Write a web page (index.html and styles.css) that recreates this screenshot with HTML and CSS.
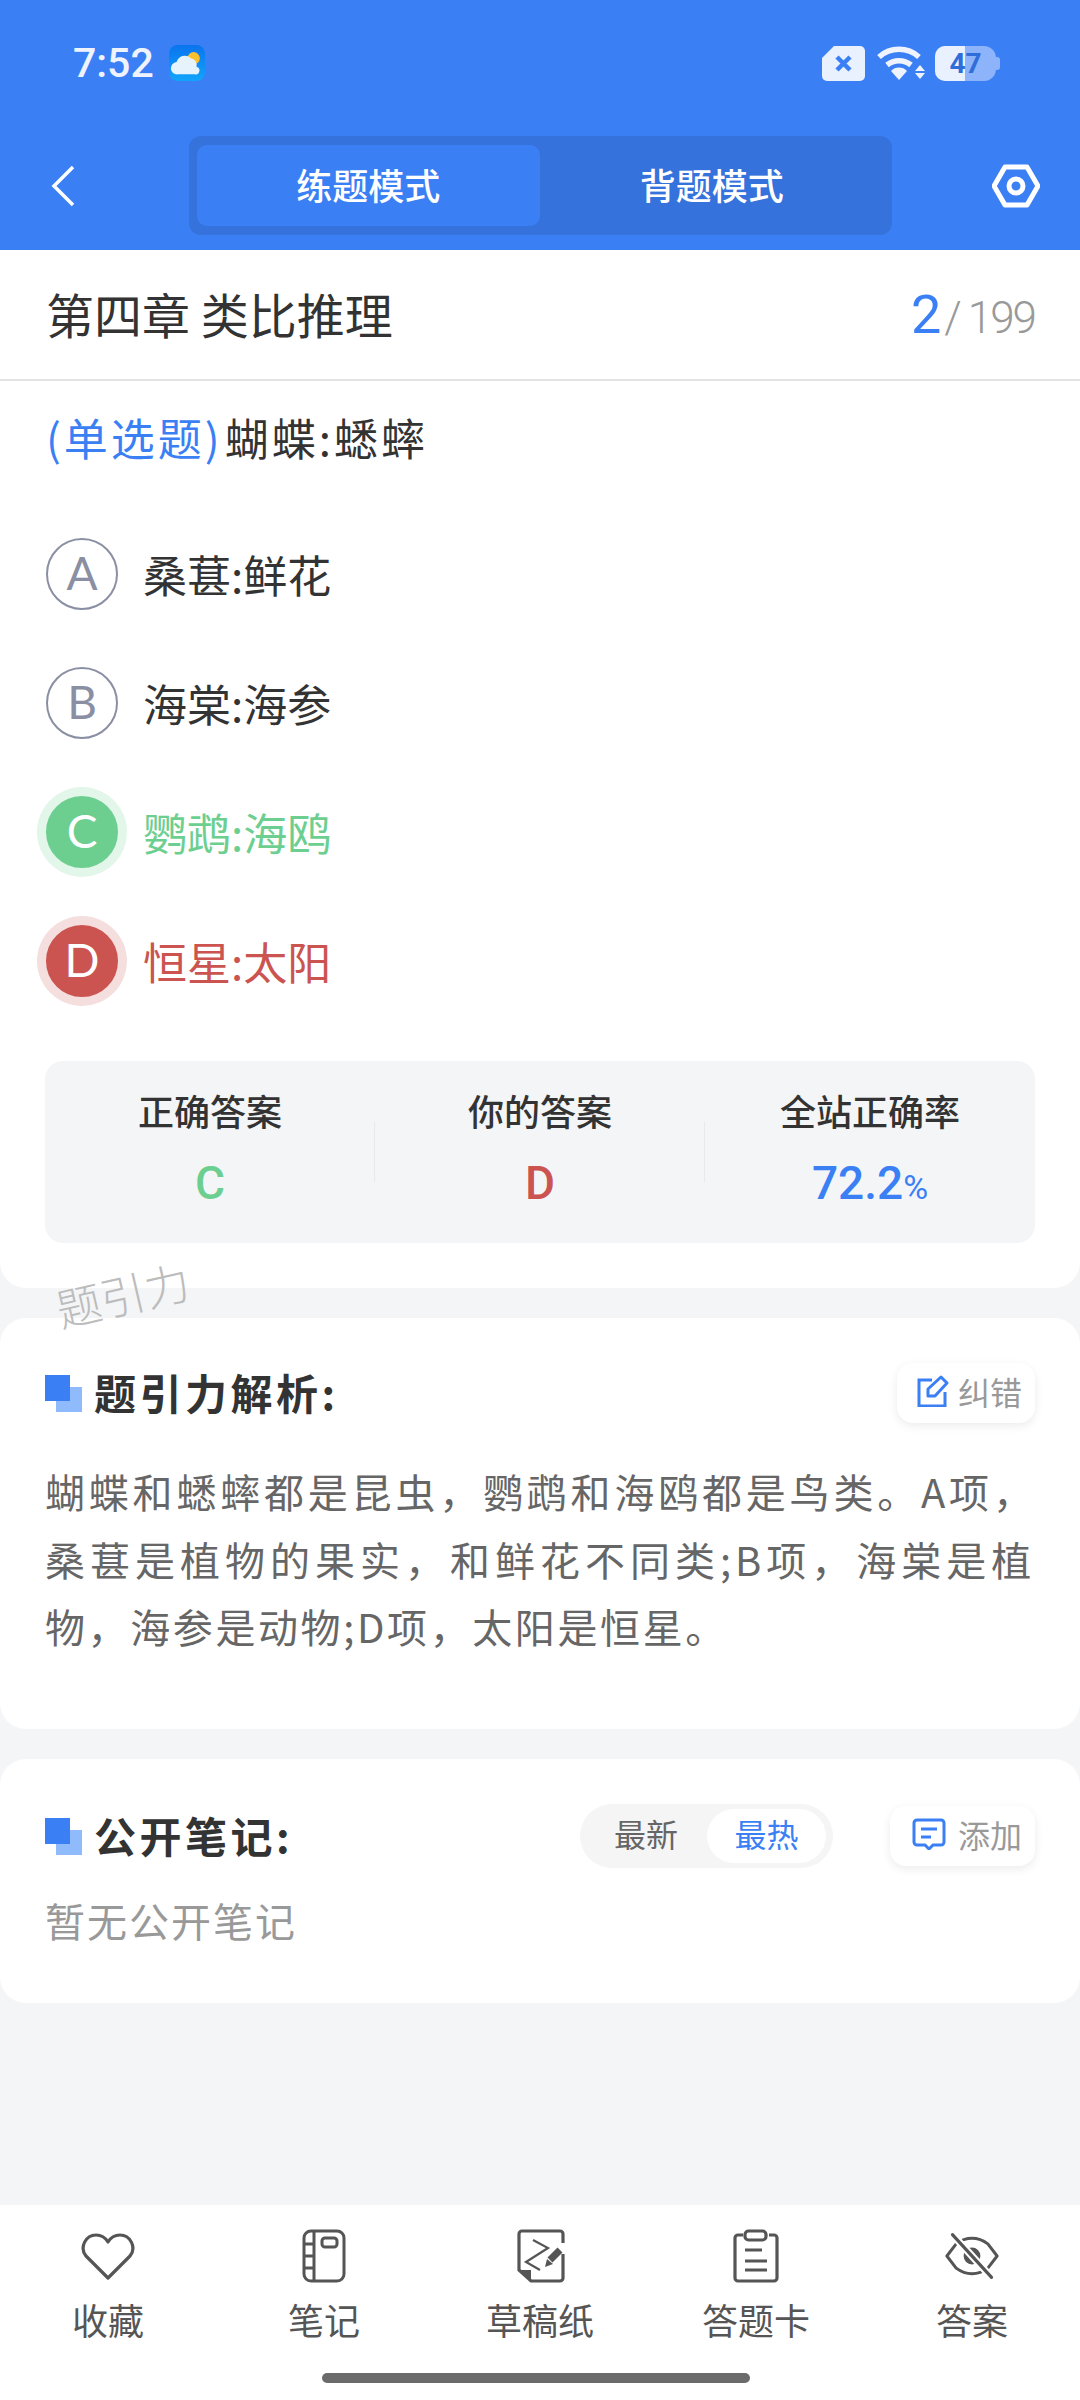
FILE: index.html
```html
<!DOCTYPE html>
<html lang="zh-CN">
<head>
    <meta charset="UTF-8">
    <meta name="viewport" content="width=device-width, initial-scale=1.0">
    <title>练题模式</title>
    <link rel="stylesheet" href="styles.css">
</head>
<body>
    <div class="page">
        <header class="top">
            <div class="status">
                <div class="status-left">
                    <span class="time">7:52</span>
                    <svg class="weather" viewBox="0 0 38 38"><defs><linearGradient id="sky" x1="0" y1="0" x2="0" y2="1"><stop offset="0" stop-color="#0a74ee"/><stop offset="1" stop-color="#12a4fb"/></linearGradient></defs><rect width="38" height="38" rx="9" fill="url(#sky)"/><circle cx="26" cy="14" r="6.5" fill="#fbc02d"/><path d="M9 31a6.500 6.500 0 0 1-1-13 9 9 0 0 1 15-4 7 7 0 0 1 6 9 4 4 0 0 1-2 8z" fill="#e6f2fc"/></svg>
                </div>
                <div class="status-right">
                    <svg class="sim" viewBox="0 0 43 35"><path d="M12 0h26a5 5 0 0 1 5 5v25a5 5 0 0 1-5 5H5a5 5 0 0 1-5-5V12z" fill="#eaf1fe"/><path d="M15 11l13 13M28 11L15 24" stroke="#3b7ff5" stroke-width="4.500" fill="none"/></svg>
                    <svg class="wifi" viewBox="0 0 48 35"><path d="M2 11a30 30 0 0 1 40 0" stroke="#eef3fe" stroke-width="5.500" fill="none"/><path d="M10 19a19 19 0 0 1 24 0" stroke="#eef3fe" stroke-width="5.500" fill="none"/><path d="M14 25a11 11 0 0 1 16 0l-8 9z" fill="#eef3fe"/><path d="M43 19l5 6H38zM38 27h10l-5 6z" fill="#eef3fe"/></svg>
                    <div class="battery">
                        <span class="battery-fill"></span>
                        <span class="battery-num">47</span>
                    </div>
                </div>
            </div>
            <div class="nav">
                <svg class="back" viewBox="0 0 24 42"><path d="M22 2L3 21l19 19" stroke="#fff" stroke-width="3.500" fill="none"/></svg>
                <div class="tabs">
                    <div class="tab active">练题模式</div>
                    <div class="tab">背题模式</div>
                </div>
                <svg class="gear" viewBox="0 0 48 44"><path d="M13 3h22l11 19-11 19H13L2 22z" stroke="#fff" stroke-width="5" fill="none" stroke-linejoin="round"/><circle cx="24" cy="22" r="7" stroke="#fff" stroke-width="5" fill="none"/></svg>
            </div>
        </header>

        <section class="card question-card">
            <div class="chapter">
                <span class="chapter-name">第四章 类比推理</span>
                <span class="counter"><b>2</b><i>/</i>199</span>
            </div>
            <div class="question"><span class="q-type">(单选题)</span>蝴蝶:蟋蟀</div>
            <div class="options">
                <div class="option">
                    <span class="letter">A</span>
                    <span>桑葚:鲜花</span>
                </div>
                <div class="option">
                    <span class="letter">B</span>
                    <span>海棠:海参</span>
                </div>
                <div class="option right">
                    <span class="letter">C</span>
                    <span>鹦鹉:海鸥</span>
                </div>
                <div class="option wrong">
                    <span class="letter">D</span>
                    <span>恒星:太阳</span>
                </div>
            </div>
            <div class="stats">
                <div class="stat">
                    <div class="stat-label">正确答案</div>
                    <div class="stat-value green">C</div>
                </div>
                <div class="stat">
                    <div class="stat-label">你的答案</div>
                    <div class="stat-value red">D</div>
                </div>
                <div class="stat">
                    <div class="stat-label">全站正确率</div>
                    <div class="stat-value blue">72.2<small>%</small></div>
                </div>
            </div>
        </section>

        <div class="watermark">题引力</div>

        <section class="card analysis-card">
            <div class="card-head">
                <div class="head-title">
                    <span class="mark"></span>
                    <h2>题引力解析:</h2>
                </div>
                <div class="chip">
                    <svg viewBox="0 0 34 32"><path d="M16 5H3v26h26V17" stroke="#3b7ff5" stroke-width="3" fill="none"/><path d="M12 21v-7L25 2l6 6-12 13z" stroke="#3b7ff5" stroke-width="3" fill="none" stroke-linejoin="round"/></svg>
                    <span>纠错</span>
                </div>
            </div>
            <div class="analysis">
                <div>蝴蝶和蟋蟀都是昆虫，鹦鹉和海鸥都是鸟类。A项，</div>
                <div class="fill">桑葚是植物的果实，和鲜花不同类;B项，海棠是植</div>
                <div class="tight">物，海参是动物;D项，太阳是恒星。</div>
            </div>
        </section>

        <section class="card notes-card">
            <div class="card-head">
                <div class="head-title">
                    <span class="mark"></span>
                    <h2>公开笔记:</h2>
                </div>
                <div class="sort">
                    <span class="sort-item">最新</span>
                    <span class="sort-item on">最热</span>
                </div>
                <div class="chip">
                    <svg viewBox="0 0 34 32"><path d="M5 2h24a3 3 0 0 1 3 3v19a3 3 0 0 1-3 3h-8l-4 4-4-4H5a3 3 0 0 1-3-3V5a3 3 0 0 1 3-3z" stroke="#3b7ff5" stroke-width="3" fill="none"/><path d="M9 11h16M9 19h10" stroke="#3b7ff5" stroke-width="3"/></svg>
                    <span>添加</span>
                </div>
            </div>
            <p class="empty">暂无公开笔记</p>
        </section>

        <footer class="bottom">
            <div class="tools">
                <div class="tool">
                    <svg viewBox="0 -3 54 54"><path d="M27 46L5 24C-2 15 5 3 15 3c5 0 9 2 12 7 3-5 7-7 12-7 10 0 17 12 10 21z" stroke="#555" stroke-width="3.200" fill="none" stroke-linejoin="round"/></svg>
                    <span>收藏</span>
                </div>
                <div class="tool">
                    <svg viewBox="0 0 54 54"><rect x="7" y="2" width="40" height="50" rx="7" stroke="#555" stroke-width="3" fill="none"/><path d="M17 2v50M7 15h10M7 27h10M7 39h10" stroke="#555" stroke-width="3" fill="none"/><rect x="25" y="9" width="15" height="9" rx="3" stroke="#555" stroke-width="3" fill="none"/></svg>
                    <span>笔记</span>
                </div>
                <div class="tool">
                    <svg viewBox="0 0 54 54"><path d="M50 14V5a3 3 0 0 0-3-3H9a3 3 0 0 0-3 3v36l12 11h29a3 3 0 0 0 3-3V25" stroke="#555" stroke-width="3.200" fill="none"/><path d="M7 41h11v11z" fill="#555"/><path d="M20 11l15 8-22 14 14 8" stroke="#555" stroke-width="2.200" fill="none"/><path d="M37 31l10-10" stroke="#555" stroke-width="7"/><path d="M32 38l2-8 6 5z" fill="#555"/></svg>
                    <span>草稿纸</span>
                </div>
                <div class="tool">
                    <svg viewBox="0 0 54 54"><path d="M14 6H9a3 3 0 0 0-3 3v40a3 3 0 0 0 3 3h36a3 3 0 0 0 3-3V9a3 3 0 0 0-3-3h-5" stroke="#555" stroke-width="3.200" fill="none"/><rect x="16" y="2" width="21" height="9" rx="3.500" stroke="#555" stroke-width="3.200" fill="none"/><path d="M16 21h17M16 32h22M16 41h22" stroke="#555" stroke-width="3.200"/></svg>
                    <span>答题卡</span>
                </div>
                <div class="tool">
                    <svg viewBox="0 0 58 50"><path d="M2 25L12 12Q20 6 29 6t17 6L56 25 46 38Q38 44 29 44T12 38z" stroke="#555" stroke-width="3.200" fill="none" stroke-linejoin="round"/><circle cx="29" cy="25" r="9" fill="#555"/><path d="M8 2l42 46" stroke="#fff" stroke-width="8"/><path d="M8 2l42 46" stroke="#555" stroke-width="3.400" stroke-linecap="round"/></svg>
                    <span>答案</span>
                </div>
            </div>
            <div class="home-bar"></div>
        </footer>
    </div>
</body>
</html>
```

FILE: styles.css
```css
* {
    box-sizing: border-box;
}

body {
    margin: 0;
    background: #f4f5f7;
    font-family: "Noto Sans CJK SC", "Noto Sans", sans-serif;
    color: #333;
}

.page {
    position: relative;
    width: 1080px;
    height: 2400px;
    display: flex;
    flex-direction: column;
}

/* header */
.top {
    height: 250px;
    background: #3b7ff5;
    flex-shrink: 0;
}

.status {
    height: 136px;
    padding: 38px 84px 0 73px;
    display: flex;
    justify-content: space-between;
    align-items: flex-start;
}

.status-left,
.status-right {
    display: flex;
    align-items: center;
    height: 50px;
}

.time {
    font-family: Roboto, sans-serif;
    font-size: 41px;
    font-weight: 500;
    color: #eef3fe;
    margin-right: 15px;
}

.weather {
    width: 36px;
    height: 38px;
}

.sim {
    width: 43px;
    height: 35px;
    margin-right: 12px;
}

.wifi {
    width: 48px;
    height: 35px;
    margin-right: 10px;
}

.battery {
    position: relative;
    width: 61px;
    height: 35px;
    background: #8db4fa;
    border-radius: 10px 12px 12px 10px;
    text-align: center;
}

.battery::after {
    content: "";
    position: absolute;
    right: -4px;
    top: 11px;
    width: 4px;
    height: 13px;
    background: #8db4fa;
    border-radius: 0 3px 3px 0;
}

.battery-fill {
    position: absolute;
    left: 0;
    top: 0;
    bottom: 0;
    width: 30px;
    background: #eaf1fe;
    border-radius: 10px 0 0 10px;
}

.battery-num {
    position: relative;
    font-family: Roboto, sans-serif;
    font-size: 28px;
    font-weight: 700;
    line-height: 35px;
    color: #2f6dd9;
}

.nav {
    display: flex;
    align-items: center;
    padding: 0 40px 0 51px;
    height: 99px;
    justify-content: space-between;
}

.back {
    width: 24px;
    height: 42px;
}

.tabs {
    width: 703px;
    height: 99px;
    margin-left: 13px;
    padding: 9px 8px;
    background: #3672dc;
    border-radius: 12px;
    display: flex;
}

.tab {
    flex: 1;
    border-radius: 10px;
    font-size: 36px;
    font-weight: 500;
    line-height: 79px;
    text-align: center;
    color: #fff;
}

.tab.active {
    background: #3b7ff5;
}

.gear {
    width: 48px;
    height: 44px;
}

/* cards */
.card {
    background: #fff;
    border-radius: 26px;
    flex-shrink: 0;
}

.question-card {
    height: 1038px;
    border-radius: 0 0 26px 26px;
}

.chapter {
    height: 131px;
    padding: 0 45px 0 46px;
    border-bottom: 2px solid #e4e4e4;
    display: flex;
    justify-content: space-between;
    align-items: center;
}

.chapter-name {
    font-size: 48px;
    line-height: 64px;
    margin-top: -4px;
    color: #333;
}

.counter {
    font-family: Roboto, sans-serif;
    font-size: 44px;
    color: #999;
    font-weight: 300;
    letter-spacing: -2px;
}

.counter b {
    font-size: 54px;
    font-weight: 400;
    color: #3b7ff5;
    letter-spacing: -3px;
}

.counter i {
    font-style: normal;
    margin: 0 8px 0 6px;
}

.question {
    padding: 0 46px;
    margin-top: 21px;
    font-size: 44px;
    letter-spacing: 3px;
    line-height: 70px;
}

.q-type {
    color: #3b7ff5;
    margin-right: 2px;
}

.options {
    margin-top: 66px;
    padding: 0 46px;
    display: flex;
    flex-direction: column;
    gap: 57px;
}

.option {
    display: flex;
    align-items: center;
    gap: 25px;
    height: 72px;
    font-size: 44px;
    color: #333;
}

.letter {
    width: 72px;
    height: 72px;
    border-radius: 50%;
    border: 2px solid #8a8fa3;
    color: #8a8fa3;
    font-family: Lato, sans-serif;
    font-size: 46px;
    line-height: 66px;
    text-align: center;
}

.right {
    color: #6dcf8f;
}

.right .letter {
    background: #6dcf8f;
    border-color: #6dcf8f;
    color: #fff;
    box-shadow: 0 0 0 9px #e2f6e9;
}

.wrong {
    color: #cb5450;
}

.wrong .letter {
    background: #cb5450;
    border-color: #cb5450;
    color: #fff;
    box-shadow: 0 0 0 9px #f5dfde;
}

.stats {
    margin: 64px 45px 0;
    height: 182px;
    padding-top: 24px;
    background: #f4f5f7;
    border-radius: 18px;
    display: grid;
    grid-template-columns: repeat(3, 1fr);
}

.stat {
    text-align: center;
    position: relative;
}

.stat + .stat::before {
    content: "";
    position: absolute;
    left: -1px;
    top: 37px;
    height: 60px;
    border-left: 1px solid #e8e9ec;
}

.stat-label {
    font-size: 36px;
    font-weight: 500;
    line-height: 50px;
}

.stat-value {
    font-family: Roboto, sans-serif;
    font-size: 46px;
    font-weight: 500;
    line-height: 70px;
    margin-top: 13px;
}

.stat-value small {
    font-size: 34px;
    font-weight: 400;
}

.green {
    color: #6dcf8f;
}

.red {
    color: #cb5450;
}

.blue {
    color: #3b7ff5;
}

/* sits across the gap between the first two cards */
.watermark {
    position: absolute;
    left: 55px;
    top: 1264px;
    font-size: 45px;
    font-weight: 300;
    line-height: 60px;
    color: #bcbcbc;
    transform: rotate(-13deg);
}

.analysis-card {
    margin-top: 30px;
    height: 411px;
    padding: 45px 45px 0;
}

.notes-card {
    margin-top: 30px;
    height: 244px;
    padding: 47px 45px 0;
}

.card-head {
    display: flex;
    align-items: center;
    height: 60px;
}

.head-title {
    display: flex;
    align-items: center;
    flex: 1;
}

.mark {
    position: relative;
    width: 37px;
    height: 37px;
    margin-right: 12px;
    background: linear-gradient(#3b7ff5, #3b7ff5) left top / 25px 26px no-repeat,
        linear-gradient(#8fbafb, #8fbafb) right bottom / 26px 25px no-repeat;
}

h2 {
    margin: -3px 0 0;
    font-size: 42px;
    font-weight: 700;
    line-height: 60px;
    letter-spacing: 3.500px;
    color: #333;
}

.chip {
    height: 60px;
    padding: 0 13px 5px 19px;
    display: flex;
    align-items: center;
    gap: 8px;
    background: #fff;
    border-radius: 16px;
    box-shadow: 0 3px 10px rgba(0, 0, 0, 0.08);
    font-size: 32px;
    color: #999;
}

.chip svg {
    width: 34px;
    height: 32px;
}

.notes-card .chip {
    padding-left: 22px;
    gap: 12px;
}

.analysis {
    margin-top: 35px;
    font-size: 40px;
    line-height: 67.500px;
    letter-spacing: 3.800px;
    color: #666;
    white-space: nowrap;
}

.fill {
    text-align-last: justify;
}

.tight {
    letter-spacing: 2.600px;
}

.sort {
    display: flex;
    align-items: center;
    margin-right: 57px;
    height: 64px;
    width: 253px;
    background: #f5f5f5;
    border-radius: 32px;
}

.sort-item {
    width: 64px;
    margin-left: 34px;
    padding-bottom: 5px;
    font-size: 32px;
    color: #666;
    line-height: 49px;
}

.sort-item.on {
    width: 119px;
    margin-left: 29px;
    text-align: center;
    background: #fff;
    border-radius: 27px;
    color: #3b7ff5;
}

.empty {
    margin: 24px 0 0;
    font-size: 40px;
    letter-spacing: 2px;
    line-height: 60px;
    color: #999;
}

/* bottom bar */
.bottom {
    position: absolute;
    left: 0;
    bottom: 0;
    width: 1080px;
    height: 195px;
    background: #fff;
}

.tools {
    display: flex;
    padding-top: 24px;
}

.tool {
    width: 216px;
    display: flex;
    flex-direction: column;
    align-items: center;
    font-size: 36px;
    line-height: 50px;
    color: #555;
}

.tool svg {
    width: 54px;
    height: 54px;
    margin-bottom: 11px;
}

.home-bar {
    position: absolute;
    left: 322px;
    top: 168px;
    width: 428px;
    height: 10px;
    border-radius: 5px;
    background: #6b6b6b;
}
```
